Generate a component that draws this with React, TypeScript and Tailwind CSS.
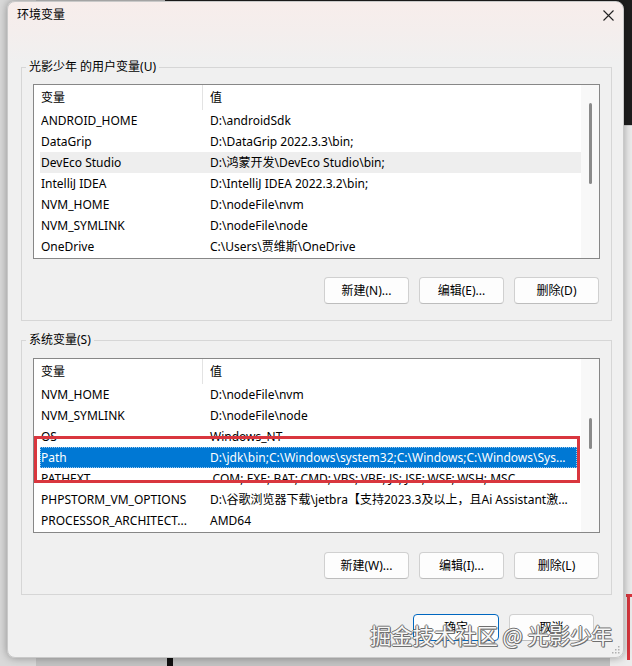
import React from "react";

type Row = { k: string; v: string; sel?: "hover" | "active" };

const userRows: Row[] = [
  { k: "ANDROID_HOME", v: "D:\\androidSdk" },
  { k: "DataGrip", v: "D:\\DataGrip 2022.3.3\\bin;" },
  { k: "DevEco Studio", v: "D:\\鸿蒙开发\\DevEco Studio\\bin;", sel: "hover" },
  { k: "IntelliJ IDEA", v: "D:\\IntelliJ IDEA 2022.3.2\\bin;" },
  { k: "NVM_HOME", v: "D:\\nodeFile\\nvm" },
  { k: "NVM_SYMLINK", v: "D:\\nodeFile\\node" },
  { k: "OneDrive", v: "C:\\Users\\贾维斯\\OneDrive" },
];

const sysRows: Row[] = [
  { k: "NVM_HOME", v: "D:\\nodeFile\\nvm" },
  { k: "NVM_SYMLINK", v: "D:\\nodeFile\\node" },
  { k: "OS", v: "Windows_NT" },
  { k: "Path", v: "D:\\jdk\\bin;C:\\Windows\\system32;C:\\Windows;C:\\Windows\\Sys...", sel: "active" },
  { k: "PATHEXT", v: ".COM;.EXE;.BAT;.CMD;.VBS;.VBE;.JS;.JSE;.WSF;.WSH;.MSC" },
  { k: "PHPSTORM_VM_OPTIONS", v: "D:\\谷歌浏览器下载\\jetbra【支持2023.3及以上，且Ai Assistant激..." },
  { k: "PROCESSOR_ARCHITECT...", v: "AMD64" },
];

function VarList({ rows, thumbTop, thumbH }: { rows: Row[]; thumbTop: string; thumbH: string }) {
  return (
    <div className="flex h-[175px] border border-[#878787] bg-white">
      <div className="flex min-w-0 flex-1 flex-col pl-[6px]">
        <div className="flex h-[25px] shrink-0 items-center">
          <div className="flex h-full w-[163px] items-center border-r border-[#e3e3e3] pl-[1px]">变量</div>
          <div className="pl-[7px]">值</div>
        </div>
        {rows.map((r) => (
          <div
            key={r.k}
            className={
              r.sel === "active"
                ? "mr-[4px] flex h-[21px] shrink-0 items-center border border-dotted border-[#9cc8ee] bg-[#0078d4] text-white"
                : r.sel === "hover"
                ? "flex h-[21px] shrink-0 items-center border border-transparent bg-[#eeeeee]"
                : "flex h-[21px] shrink-0 items-center border border-transparent"
            }
          >
            <div className="w-[162px] shrink-0 overflow-hidden whitespace-nowrap">{r.k}</div>
            <div className="min-w-0 flex-1 overflow-hidden whitespace-nowrap pl-[7px]">{r.v}</div>
          </div>
        ))}
      </div>
      <div className="flex w-[18px] shrink-0 flex-col items-center bg-[#f8f8f8]">
        <div className={`w-[3px] rounded-full bg-[#8a8a8a] ${thumbTop} ${thumbH}`} />
      </div>
    </div>
  );
}

function Btn({ children, primary }: { children: React.ReactNode; primary?: boolean }) {
  return (
    <div
      className={
        primary
          ? "flex h-[27px] w-[86px] items-center justify-center rounded-[4px] border border-[#0067c0] bg-[#fdfdfd]"
          : "flex h-[27px] w-[85px] items-center justify-center rounded-[4px] border border-[#d0d0d0] border-b-[#bdbdbd] bg-[#fdfdfd]"
      }
    >
      {children}
    </div>
  );
}

export default function App() {
  return (
    <div className="relative h-[666px] w-[632px] overflow-hidden bg-[#c3c3c3] font-['Noto_Sans','Noto_Sans_CJK_SC',sans-serif] text-[12px] leading-[16px] text-black">
      {/* desktop behind */}
      <div className="absolute left-0 top-0 h-[666px] w-[36px] bg-[#d9d9d9]" />
      <div className="absolute left-[165px] top-0 h-[125px] w-[467px] bg-[#1e1e1e]" />
      <div className="absolute left-[610px] top-[125px] h-[541px] w-[22px] border-t border-[#cfcfcf] bg-[#ececec]" />
      <div className="absolute left-[626px] top-[594px] h-[3px] w-[6px] bg-[#d9363e]" />
      <div className="absolute left-[627px] top-[594px] h-[66px] w-[3px] bg-[#d9363e]" />
      <div className="absolute left-[167px] top-[650px] h-[16px] w-[6px] bg-[#111]" />

      {/* dialog */}
      <div className="relative ml-[7px] mt-[1px] flex h-[657px] w-[617px] flex-col rounded-[8px] border border-[#c9c9c9] bg-[linear-gradient(to_bottom,#f7edeb_0px,#f4eeed_30px,#f0f0f0_60px)] shadow-[0_0_8px_rgba(0,0,0,0.35)]">
        <div className="flex h-[26px] shrink-0 items-center justify-between pl-[9px] pr-[9px]">
          <span>环境变量</span>
          <svg width="11" height="11" viewBox="0 0 11 11" className="text-[#222]">
            <path d="M0.5 0.5 L10.5 10.5 M10.5 0.5 L0.5 10.5" stroke="currentColor" strokeWidth="1.1" fill="none" />
          </svg>
        </div>

        <fieldset className="ml-[13px] mt-[31px] w-[591px] border border-[#d6d6d6]">
          <legend className="ml-[4px] px-[3px] leading-[16px]">光影少年 的用户变量(U)</legend>
          <div className="px-[11px] pb-[16px] pt-[9px]">
            <VarList rows={userRows} thumbTop="mt-[18px]" thumbH="h-[81px]" />
            <div className="mt-[18px] flex justify-end gap-[10px] pr-[1px]">
              <Btn>新建(N)...</Btn>
              <Btn>编辑(E)...</Btn>
              <Btn>删除(D)</Btn>
            </div>
          </div>
        </fieldset>

        <fieldset className="ml-[13px] mt-[11px] w-[591px] border border-[#d6d6d6]">
          <legend className="ml-[4px] px-[3px] leading-[16px]">系统变量(S)</legend>
          <div className="px-[11px] pb-[15px] pt-[10px]">
            <VarList rows={sysRows} thumbTop="mt-[59px]" thumbH="h-[31px]" />
            <div className="mt-[19px] flex justify-end gap-[10px] pr-[1px]">
              <Btn>新建(W)...</Btn>
              <Btn>编辑(I)...</Btn>
              <Btn>删除(L)</Btn>
            </div>
          </div>
        </fieldset>

        <div className="mt-[19px] flex justify-end gap-[10px] pr-[29px]">
          <Btn primary>确定</Btn>
          <Btn>取消</Btn>
        </div>

        {/* resize grip */}
        <svg width="8" height="8" viewBox="0 0 8 8" className="absolute bottom-[3px] right-[3px] text-[#b0b0b0]">
          <rect x="6" y="0" width="1.5" height="1.5" fill="currentColor" />
          <rect x="3" y="3" width="1.5" height="1.5" fill="currentColor" />
          <rect x="6" y="3" width="1.5" height="1.5" fill="currentColor" />
          <rect x="0" y="6" width="1.5" height="1.5" fill="currentColor" />
          <rect x="3" y="6" width="1.5" height="1.5" fill="currentColor" />
          <rect x="6" y="6" width="1.5" height="1.5" fill="currentColor" />
        </svg>
      </div>

      {/* red annotation box */}
      <div className="absolute left-[34px] top-[436px] h-[47px] w-[546px] border-[3px] border-[#d9363e]" />

      {/* watermark */}
      <div className="absolute left-[370px] top-[620px] whitespace-nowrap font-['Noto_Sans_CJK_SC','Noto_Sans',sans-serif] text-[21.3px] leading-[30px] text-[#f7f7f7] [text-shadow:-1px_0_#6f6f6f,1px_0_#6f6f6f,0_-1px_#6f6f6f,0_1px_#6f6f6f,1px_1px_#6f6f6f]">
        掘金技术社区 @ 光影少年
      </div>
    </div>
  );
}
